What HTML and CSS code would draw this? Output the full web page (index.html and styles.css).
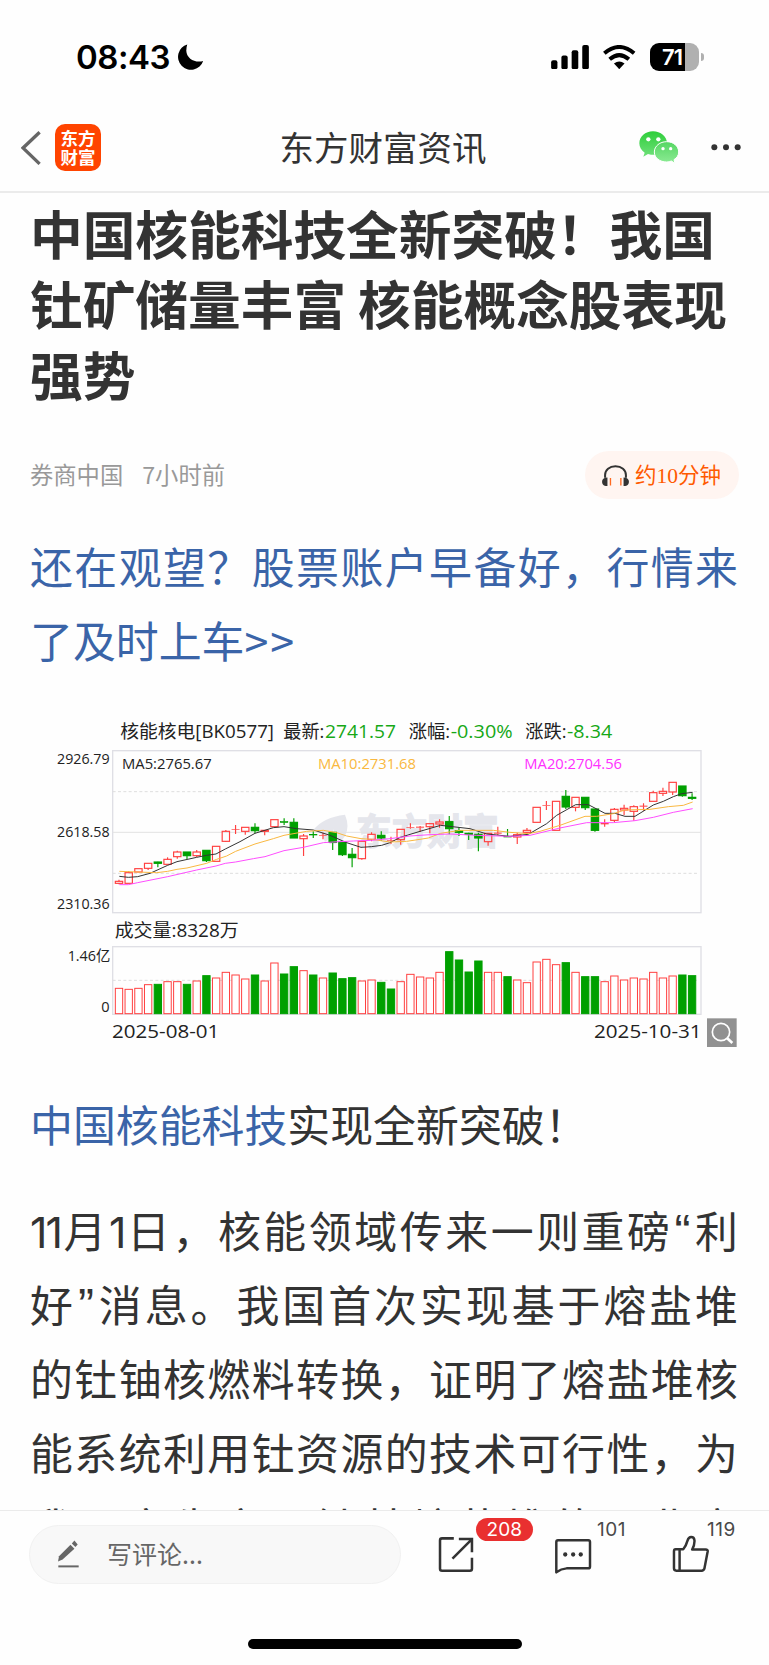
FILE: index.html
```html
<!DOCTYPE html>
<html lang="zh-CN">
<head>
<meta charset="utf-8">
<title>东方财富资讯</title>
<link rel="stylesheet" href="styles.css">
</head>
<body>
<div class="page">
  <header class="status">
    <div class="status-left">
      <span class="time">08:43</span>
      <svg class="moon" viewBox="0 0 77 78"><path d="M28 1A39 39 0 1 0 76 51C52 58 26 44 25 20Q25 9 28 1Z"/></svg>
    </div>
    <div class="status-right">
      <svg class="signal" viewBox="0 0 114 74"><rect x="0" y="46" width="19" height="27" rx="6"/><rect x="31" y="32" width="19" height="41" rx="6"/><rect x="62" y="16" width="20" height="57" rx="6"/><rect x="94" y="0" width="20" height="73" rx="6"/></svg>
      <svg class="wifi" viewBox="0 0 98 74"><g fill="none" stroke="#000" stroke-width="12"><path d="M4 25Q49-13 94 25"/><path d="M20 43Q49 18 78 43"/></g><path d="M33 56Q49 43 65 56L49 73Z"/></svg>
      <div class="battery"><div class="battery-body"><span>71</span></div><i class="battery-tip"></i></div>
    </div>
  </header>
  <nav class="nav">
    <div class="nav-left">
      <svg class="back" viewBox="0 0 60 104"><path d="M56 4L6 51L56 99" fill="none" stroke="#666" stroke-width="10"/></svg>
      <div class="logo"><span>东方</span><span>财富</span></div>
    </div>
    <h1 class="nav-title">东方财富资讯</h1>
    <div class="nav-right">
      <svg class="wechat" viewBox="0 0 120 98">
        <defs><linearGradient id="g1" x2="0" y2="1"><stop stop-color="#2fce3b"/><stop offset="1" stop-color="#6fe07a"/></linearGradient><linearGradient id="g2" x2="0" y2="1"><stop stop-color="#55d662"/><stop offset="1" stop-color="#8deb95"/></linearGradient></defs>
        <path fill="url(#g1)" d="M42 1C19 1 1 17 1 37c0 12 6 21 16 28l-4 12 14-8c32 9 57-7 57-32C84 17 65 1 42 1Z"/>
        <path fill="url(#g2)" stroke="#fff" stroke-width="3" d="M83 32C63 32 46 45 46 63s17 30 37 30c5 0 10-1 14-3l11 7-3-11c9-6 14-13 14-23C119 45 103 32 83 32Z"/>
        <g fill="#fff"><circle cx="28" cy="25" r="6.500"/><circle cx="58" cy="25" r="6.500"/><circle cx="72" cy="53" r="5"/><circle cx="95" cy="53" r="5"/></g>
      </svg>
      <svg class="more" viewBox="0 0 90 20"><g fill="#333"><circle cx="10" cy="10" r="9"/><circle cx="45" cy="10" r="9"/><circle cx="80" cy="10" r="9"/></g></svg>
    </div>
  </nav>

  <main class="article">
    <h2 class="title">中国核能科技全新突破！我国<br>钍矿储量丰富 核能概念股表现<br>强势</h2>
    <div class="meta">
      <span class="source">券商中国</span><span class="ago">7小时前</span>
      <div class="listen">
        <svg class="phones" viewBox="0 0 80 64"><path d="M9 38V30C9 14 22 4 40 4s31 10 31 26v8" fill="none" stroke="#333" stroke-width="6"/><path fill="#333" d="M16 37v26C5 63 0 58 0 50s5-13 16-13ZM64 37v26c11 0 16-5 16-13s-5-13-16-13Z"/><path d="M25 39v22M56 39v22" stroke="#ff6a20" stroke-width="4"/></svg>
        <span>约10分钟</span>
      </div>
    </div>
    <p class="para link promo"><span class="line full">还在观望？股票账户早备好，行情来</span><span class="line">了及时上车<span class="arrows">&gt;&gt;</span></span></p>
    <svg class="chart" viewBox="0 676 769 410"><g id="plot" transform="translate(40 710) scale(.333333)"></g></svg>
    <p class="para"><span class="line"><a class="link">中国核能科技</a>实现全新突破！</span></p>
    <p class="para body">
      <span class="line full"><span class="ones">11</span>月<span class="ones">1</span>日，核能领域传来一则重磅<span class="quote">“</span>利</span>
      <span class="line full">好<span class="quote">”</span>消息。我国首次实现基于熔盐堆</span>
      <span class="line full">的钍铀核燃料转换，证明了熔盐堆核</span>
      <span class="line full">能系统利用钍资源的技术可行性，为</span>
      <span class="line full">我国率先实现钍基熔盐堆的工业应</span>
    </p>
  </main>

  <footer class="bottom">
    <div class="tools">
      <div class="input">
        <svg class="pen" viewBox="0 0 64 86"><g fill="#666"><path d="M0 65L3 49L38 14L50 26L14 59Z"/><path d="M42 10L50 1L60 13L53 21Z"/><rect x="1" y="77" width="62" height="6"/></g></svg>
        <span>写评论...</span>
      </div>
      <div class="action share">
        <svg viewBox="115 165 110 115"><g fill="none" stroke="#333" stroke-width="7.500"><path d="M162 175H127Q121 175 121 181V265Q121 271 127 271H210Q216 271 216 265V233"/><path d="M177 177H216V216M216 177L158 235"/></g></svg>
        <span class="badge">208</span>
      </div>
      <div class="action comment">
        <svg viewBox="463 165 115 120"><path d="M475 181H567Q572 181 572 186V260Q572 266 566 266H501Q485 267 470 278V186Q470 181 475 181Z" fill="none" stroke="#333" stroke-width="7.500" stroke-linejoin="round"/><g fill="#333"><circle cx="497" cy="224" r="6.500"/><circle cx="521" cy="224" r="6.500"/><circle cx="544" cy="224" r="6.500"/></g></svg>
        <span class="count">101</span>
      </div>
      <div class="action like">
        <svg viewBox="815 160 115 120"><path d="M838 206H826Q821 206 821 212V264Q821 271 828 271H905Q911 271 913 265L923 213Q924 207 917 207H876Q884 193 883 179Q882 169 873 169Q865 169 862 180Q858 195 849 206H838V271" fill="none" stroke="#333" stroke-width="7.500" stroke-linejoin="round"/></svg>
        <span class="count">119</span>
      </div>
    </div>
    <div class="home"></div>
  </footer>
</div>
<script src="chart.js"></script>
</body>
</html>
```
FILE: styles.css
```css
* { box-sizing: border-box; }
body { margin: 0; background: #fff; font-family: "Noto Sans CJK SC", sans-serif; color: #333; }
.page { width: 769px; height: 1665px; display: flex; flex-direction: column; overflow: hidden; background: #fefefe; }
svg { display: block; flex: none; }

.status { height: 103px; flex: none; display: flex; justify-content: space-between; padding: 36px 65px 0 76px; }
.status-left, .status-right { display: flex; align-items: center; height: 42px; }
.time { font: 600 33px/42px Inter, sans-serif; color: #000; width: 102px; letter-spacing: -.5px; }
.moon { width: 25.500px; height: 26px; }
.signal { width: 38px; height: 24.500px; margin-right: 14.500px; }
.wifi { width: 32.500px; height: 24.500px; margin-right: 14.500px; }
.battery { display: flex; align-items: center; }
.battery-body { width: 49px; height: 28px; border-radius: 9px; background: linear-gradient(90deg, #000 35px, #b0b0b0 35px); color: #fff; font: 600 22px/28px Inter, sans-serif; padding-left: 12px; letter-spacing: -1px; }
.battery-tip { width: 3px; height: 8px; margin-left: 2px; border-radius: 0 4px 4px 0; background: #b0b0b0; }

.nav { height: 90px; flex: none; display: grid; grid-template-columns: 1fr auto 1fr; align-items: center; padding: 0 23px 0 20px; border-bottom: 2px solid #ebebeb; }
.nav-left { display: flex; align-items: center; padding: 1px 0 0 1px; }
.back { width: 20px; height: 34.500px; margin-top: 1px; }
.logo { width: 46px; height: 47px; margin-left: 14px; margin-top: -1px; border-radius: 10px; background: #ff4400; color: #fff; font-weight: 700; font-size: 17.500px; line-height: 19px; display: flex; flex-direction: column; align-items: center; justify-content: center; }
.nav-title { margin: -3px 0 0; font-weight: 400; font-size: 34.500px; line-height: 50px; }
.nav-right { display: flex; align-items: center; justify-content: flex-end; padding-top: 1px; }
.wechat { width: 40px; height: 32.700px; margin-right: 32.500px; }
.more { width: 30px; height: 6.700px; margin-right: 5px; }

.article { height: 1317px; flex: none; overflow: hidden; padding: 4px 30px 0; }
.title { margin: 0; font-size: 52.700px; line-height: 70.300px; font-weight: 700; white-space: nowrap; }
.meta { display: flex; align-items: center; height: 48px; margin-top: 43.500px; font-size: 23.300px; line-height: 34px; color: #999; }
.source, .ago { margin-top: -3px; }
.ago { margin-left: 19px; }
.listen { margin-left: auto; width: 154px; height: 48px; border-radius: 24px; background: #fff5f1; color: #ff5a00; display: flex; align-items: center; padding-left: 17px; font: 21.500px/32px "Liberation Serif", "Noto Sans CJK SC", serif; white-space: nowrap; }
.phones { width: 27px; height: 21.500px; margin-right: 6px; }
.listen span { padding-top: 1px; }
.para { margin: 0 0 32.500px; font-size: 42.900px; line-height: 74.100px; width: 708px; }
.link { color: #3a64a8; }
.promo { margin: 28.500px 0 0; }
.line { display: block; height: 74.100px; white-space: nowrap; }
.full { text-align: justify; text-align-last: justify; white-space: normal; }
.ones { font-family: Inter, sans-serif; line-height: 0; letter-spacing: -2px; }
.quote { font-family: "Liberation Sans", sans-serif; line-height: 0; font-size: 48px; padding: 0 2px; }
.arrows { letter-spacing: 2px; }
.chart { width: 769px; height: 410px; margin: -.5px 0 0 -30px; }
.chart text { font-family: "Open Sans", "Noto Sans CJK SC", sans-serif; }

.bottom { flex: 1; border-top: 1px solid #ebebeb; background: #fefefe; display: flex; flex-direction: column; justify-content: space-between; align-items: center; }
.tools { width: 769px; display: flex; padding: 14px 0 0 29px; }
.input { width: 372px; height: 59px; border-radius: 30px; border: 1px solid #f1f1f1; background: #f8f8f8; color: #666; display: flex; align-items: center; padding-left: 28px; font-size: 25px; }
.input span { margin-top: -4px; }
.pen { width: 21px; height: 28.500px; margin-right: 28px; }
.action { position: relative; padding-top: 10px; }
.share { width: 37px; margin-left: 37px; }
.comment { width: 38px; margin-left: 79px; }
.like { width: 38px; margin-left: 79.500px; margin-top: -1.500px; }
.badge { position: absolute; left: 37.500px; top: -7.500px; width: 57.500px; height: 23px; border-radius: 12px; background: #e93030; color: #fff; font: 19px/23px Inter, sans-serif; text-align: center; }
.count { position: absolute; left: 43px; top: -7px; font: 19px/23px Inter, sans-serif; color: #4a4a4a; letter-spacing: .5px; }
.like .count { left: 35.500px; top: -5.500px; }
.home { width: 274px; height: 10px; border-radius: 5px; background: #000; margin-bottom: 16px; }
```
FILE: chart.js
```js
const NS = 'http://www.w3.org/2000/svg';
const plot = document.getElementById('plot');
const RED = '#ff4040', GREEN = '#00a000';

function add(tag, attrs, text) {
  const el = document.createElementNS(NS, tag);
  for (const k in attrs) el.setAttribute(k, attrs[k]);
  if (text) el.textContent = text;
  plot.appendChild(el);
}
function label(text, x1, x2, y, size, fill) {
  add('text', { x: x1, y, 'font-size': size, fill: fill || '#222', textLength: x2 - x1, lengthAdjust: 'spacingAndGlyphs' }, text);
}

// Watermark
add('path', { d: 'M822 358Q850 322 915 314Q930 350 915 378Q900 405 867 402Q885 385 882 358Q872 385 855 396Q850 372 822 358Z', fill: '#e5e6ec' });
add('text', { x: 948, y: 405, 'font-size': 108, 'font-weight': 700, fill: '#e5e6ec', stroke: '#e5e6ec', 'stroke-width': 4, textLength: 428, lengthAdjust: 'spacingAndGlyphs' }, '东方财富');

// Frames and grid
add('rect', { x: 218, y: 122, width: 1765, height: 486, fill: 'none', stroke: '#dfdfe5', 'stroke-width': 4 });
add('rect', { x: 218, y: 710, width: 1765, height: 203, fill: 'none', stroke: '#dfdfe5', 'stroke-width': 4 });
add('path', { d: 'M218 367H1983', stroke: '#e2e2e2', 'stroke-width': 3 });
add('path', { d: 'M218 245H1975M218 490H1975M218 811H1975', stroke: '#dedede', 'stroke-width': 3, 'stroke-dasharray': '9 7' });

// color, high, body top, body bottom, low
const candles = `r 509 514 520 523|r 484 488 520 520|r 476 476 486 486|r 460 460 475 480|g 455 456 460 472|r 442 448 463 463|r 422 426 440 446|g 426 426 437 447|r 420 426 437 441|g 421 421 452 456|r 409 409 454 454|r 360 364 394 396|r 345 358 358 372|r 352 352 364 374|g 340 352 362 370|r 360 361 364 376|r 329 329 350 350|g 325 335 337 345|g 325 337 384 384|r 372 378 386 438|g 364 373 375 384|r 368 376 377 388|g 367 367 397 420|g 396 396 434 438|g 414 433 443 472|r 394 394 446 449|r 367 373 388 394|g 364 376 384 392|r 380 391 392 402|r 358 358 389 404|r 340 352 353 356|r 348 351 352 366|r 340 341 350 370|r 328 336 342 353|g 318 335 356 373|g 352 362 367 378|g 368 370 373 390|g 368 373 384 424|r 370 370 395 407|r 350 369 371 376|g 357 379 381 381|r 368 374 381 402|r 354 361 367 374|r 292 292 337 337|r 273 286 287 300|r 274 274 361 361|g 240 259 291 297|r 262 262 292 304|g 262 262 293 300|g 297 297 361 365|r 328 341 342 350|r 294 298 331 336|r 284 295 300 315|r 286 290 304 332|r 280 288 289 302|r 242 248 274 274|r 233 244 250 258|r 217 217 246 255|g 228 228 257 260|g 250 262 265 270`.split('|').map(s => s.split(' '));
const volumes = [234,237,234,223,222,214,214,222,212,196,203,186,194,206,194,212,158,191,169,181,194,203,188,205,202,212,209,216,236,214,192,200,203,186,124,149,185,152,186,186,199,209,217,155,147,163,157,186,199,199,214,197,209,203,206,186,203,197,194,196];

candles.forEach(([c, h, t, b, l], i) => {
  const x = 237 + i * 29.14;
  const color = c === 'r' ? RED : GREEN;
  [h, t, b, l] = [h, t, b, l].map(Number);
  add('path', { d: `M${x} ${h}V${t}M${x} ${b}V${l}`, stroke: color, 'stroke-width': 3.5 });
  const thin = b - t < 3;
  add('rect', { x: x - 11, y: t, width: 22, height: Math.max(b - t, 1), fill: c === 'g' ? color : 'none', stroke: color, 'stroke-width': thin ? 2 : 3.5 });
  const v = volumes[i] + 601;
  const solid = c === 'g' || i === 28;
  add('rect', { x: x - 11, y: v, width: 22, height: 911 - v, fill: solid ? GREEN : '#fff', stroke: solid ? GREEN : RED, 'stroke-width': 3 });
});

// Moving averages
[['#333', '238,499 265,502 293,500 330,490 383,466 411,455 470,442 500,436 528,432 556,417 600,395 645,370 700,353 732,350 770,356 820,360 870,376 920,398 963,412 994,410 1025,406 1050,398 1081,382 1140,364 1202,346 1290,356 1340,372 1410,379 1465,373 1520,341 1550,316 1607,284 1645,284 1695,310 1725,310 1755,319 1785,319 1840,285 1870,274 1900,260 1925,251 1958,247'],
 ['#f9b840', '238,484 290,486 350,488 383,484 411,478 441,474 500,460 530,448 560,438 587,424 645,402 700,386 732,376 800,364 850,361 890,368 920,378 963,386 994,388 1050,396 1100,394 1140,388 1165,384 1202,370 1260,361 1360,361 1410,367 1465,371 1500,364 1560,346 1635,319 1670,319 1720,311 1755,300 1830,298 1885,290 1930,286 1958,276'],
 ['#ff4dff', '238,524 265,524 293,518 383,500 470,480 528,468 556,460 587,456 640,446 675,440 732,422 790,412 850,398 880,396 940,393 994,391 1050,386 1110,378 1170,374 1230,372 1310,376 1410,379 1470,376 1560,354 1640,338 1720,338 1785,332 1840,322 1900,307 1958,296']
].forEach(([stroke, points]) => add('polyline', { points, fill: 'none', stroke, 'stroke-width': 3 }));

// Labels
const UP = '#16a816';
label('核能核电[BK0577]', 241, 702, 84, 55);
label('最新:', 730, 853, 84, 55);
label('2741.57', 855, 1068, 84, 55, UP);
label('涨幅:', 1106, 1230, 84, 55);
label('-0.30%', 1232, 1418, 84, 55, UP);
label('涨跌:', 1456, 1580, 84, 55);
label('-8.34', 1581, 1717, 84, 55, UP);
label('2926.79', 51, 209, 163, 43);
label('2618.58', 51, 209, 381, 43);
label('2310.36', 51, 209, 598, 43);
label('MA5:2765.67', 246, 515, 177, 43);
label('MA10:2731.68', 834, 1128, 177, 43, '#f9b840');
label('MA20:2704.56', 1453, 1746, 177, 43, '#ff30ff');
label('成交量:8328万', 224, 596, 680, 54);
label('1.46亿', 83, 211, 752, 43);
label('0', 184, 209, 905, 43);
label('2025-08-01', 216, 538, 983, 54);
label('2025-10-31', 1662, 1985, 983, 54);

// Magnifier button
add('rect', { x: 2001, y: 925, width: 89, height: 86, fill: '#919191' });
add('circle', { cx: 2043, cy: 966, r: 26, fill: 'none', stroke: '#fff', 'stroke-width': 5 });
add('path', { d: 'M2061 984L2077 999', stroke: '#fff', 'stroke-width': 8 });
```
